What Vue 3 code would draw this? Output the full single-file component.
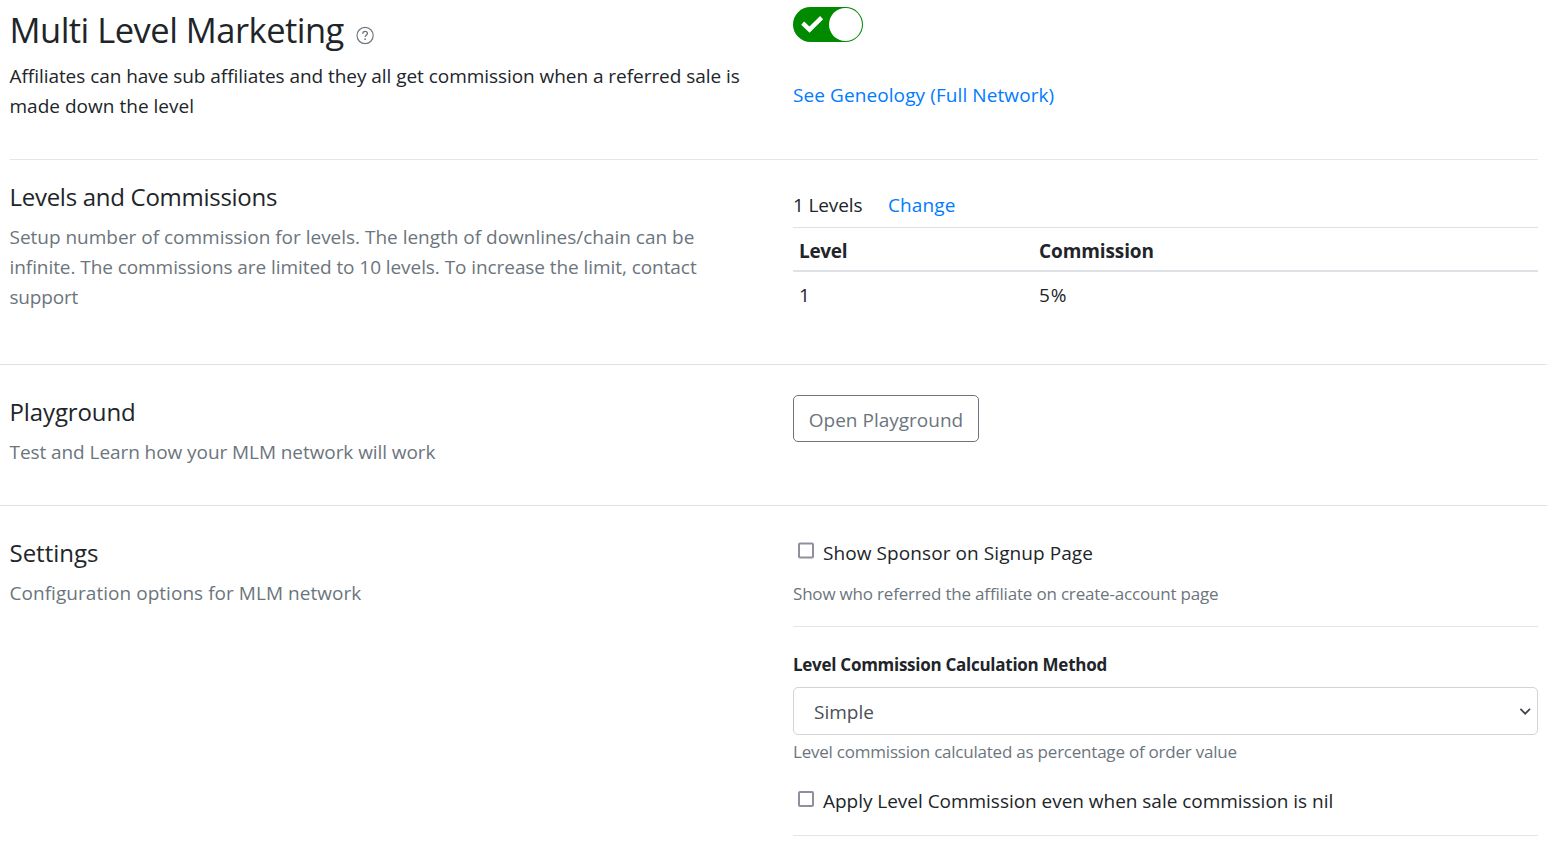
<script setup>
import { ref } from 'vue'

const enabled = ref(true)
const showSponsor = ref(false)
const applyNil = ref(false)
const method = ref('simple')
const levels = [{ level: 1, commission: '5%' }]
</script>

<template>
  <main class="page">
    <section class="row intro">
      <div class="left">
        <h1><span class="title">Multi Level Marketing</span>
          <svg class="help" viewBox="0 0 18 18" width="18" height="18" fill="none" stroke="#6c757d">
            <circle cx="9" cy="9" r="8.1" stroke-width="1.15" />
            <path d="M6.7 7.2C6.7 5.6 7.7 4.8 9 4.8s2.3.8 2.3 2.1c0 1.8-2.3 1.8-2.3 3.7" stroke-width="1.3" />
            <circle cx="9" cy="12.7" r=".85" fill="#6c757d" stroke="none" />
          </svg>
        </h1>
        <p class="lead"><span class="l1">Affiliates can have sub affiliates and they all get commission when a referred sale is</span><br><span class="l2">made down the level</span></p>
      </div>
      <div class="right">
        <label class="switch">
          <input v-model="enabled" type="checkbox">
          <svg class="tick" viewBox="0 0 24 20" width="24" height="20"><path d="M2.7 9.2 9.5 15.6 21.6 3.6" fill="none" stroke="#fff" stroke-width="4.4" /></svg>
          <span class="knob"></span>
        </label>
        <a class="tree">See Geneology (Full Network)</a>
      </div>
    </section>

    <section class="row levels">
      <div class="left">
        <h2 class="h-levels">Levels and Commissions</h2>
        <p class="muted"><span class="m1">Setup number of commission for levels. The length of downlines/chain can be</span><br><span class="m2">infinite. The commissions are limited to 10 levels. To increase the limit, contact</span><br><span class="m3">support</span></p>
      </div>
      <div class="right">
        <div class="count"><span class="n-levels">1 Levels</span><a class="change">Change</a></div>
        <table>
          <thead><tr><th><span class="th1">Level</span></th><th><span class="th2">Commission</span></th></tr></thead>
          <tbody><tr v-for="l in levels" :key="l.level"><td>{{ l.level }}</td><td class="pct">{{ l.commission }}</td></tr></tbody>
        </table>
      </div>
    </section>

    <section class="row playground">
      <div class="left">
        <h2 class="h-play">Playground</h2>
        <p class="muted"><span class="m4">Test and Learn how your MLM network will work</span></p>
      </div>
      <div class="right">
        <button type="button">Open Playground</button>
      </div>
    </section>

    <section class="row settings">
      <div class="left">
        <h2 class="h-set">Settings</h2>
        <p class="muted"><span class="m5">Configuration options for MLM network</span></p>
      </div>
      <div class="right">
        <label class="check sponsor"><input v-model="showSponsor" type="checkbox"><span class="c1">Show Sponsor on Signup Page</span></label>
        <p class="small s1">Show who referred the affiliate on create-account page</p>
        <hr>
        <p class="field">Level Commission Calculation Method</p>
        <div class="select">
          <select v-model="method"><option value="simple">Simple</option></select>
          <svg class="chevron" viewBox="0 0 12 8" width="12" height="8"><path d="M1.4.9 6.2 5.7 11 .9" fill="none" stroke="#3d444b" stroke-width="1.7" /></svg>
        </div>
        <p class="small s2">Level commission calculated as percentage of order value</p>
        <label class="check nil"><input v-model="applyNil" type="checkbox"><span class="c2">Apply Level Commission even when sale commission is nil</span></label>
        <hr class="last">
      </div>
    </section>
  </main>
</template>

<style>
body { background: #fff; overflow: hidden; }
</style>

<style scoped>
* { box-sizing: border-box; }
.page { height: 850px; overflow: hidden; font: 19px/30px "Segoe UI", "Open Sans", "Noto Sans", sans-serif; color: #212529; white-space: nowrap; }
.row { display: grid; grid-template-columns: 783px 745px; padding: 0 9px 0 10px; }
.left { margin-left: -0.5px; }
h1, h2, p { margin: 0; font-weight: 400; }
a { color: #007bff; cursor: pointer; }
.intro { height: 160px; margin: 0 9px 0 10px; padding: 0; border-bottom: 1px solid #e5e5e5; }
h1 { display: flex; align-items: flex-start; height: 61px; padding-top: 8px; font-size: 34.5px; line-height: 44px; }
.title { width: 334px; letter-spacing: -0.52px; }
.help { margin: 18px 0 0 12px; transform: translate(0.1px, 0.5px); }
.l1 { letter-spacing: -0.05px; }
.l2 { letter-spacing: 0.02px; }
.intro .right { display: flex; flex-direction: column; align-items: flex-start; padding-top: 7px; }
.switch { position: relative; display: block; width: 70px; height: 35px; border-radius: 18px; background: #008a00; }
.switch input { position: absolute; opacity: 0; margin: 0; }
.tick { position: absolute; left: 7px; top: 7px; }
.knob { position: absolute; right: 1px; top: 1px; width: 33px; height: 33px; border-radius: 50%; background: #fff; }
.tree { margin-top: 38px; letter-spacing: 0.09px; }
.levels { height: 205px; border-bottom: 1px solid #dee2e6; }
h2 { font-size: 24px; line-height: 30px; padding-top: 22px; height: 62px; }
.h-levels { letter-spacing: -0.28px; }
.h-play { letter-spacing: -0.12px; }
.h-set { letter-spacing: -0.02px; }
.muted, .small { color: #6c757d; }
.m1 { letter-spacing: -0.015px; }
.m2 { letter-spacing: -0.07px; }
.m3 { letter-spacing: -0.2px; }
.m4 { letter-spacing: -0.07px; }
.m5 { letter-spacing: 0.04px; }
.count { height: 67px; padding-top: 30px; display: flex; }
.n-levels { width: 95px; letter-spacing: -0.13px; }
.change { letter-spacing: 0.1px; }
table { width: 745px; border-collapse: collapse; table-layout: fixed; }
th, td { height: 43px; padding: 4px 6px 0; text-align: left; border-top: 1px solid #dee2e6; }
th { font-weight: 700; border-bottom: 2px solid #dee2e6; }
th:first-child { width: 240px; }
.th1 { letter-spacing: -0.3px; }
.th2 { letter-spacing: -0.1px; }
.pct { letter-spacing: 0.8px; }
.playground { height: 141px; border-bottom: 1px solid #dee2e6; }
.playground h2, .settings h2 { padding-top: 32px; height: 72px; }
button { display: block; margin-top: 30px; width: 186px; height: 47px; padding: 2px 0 0; border: 1px solid #6c757d; border-radius: 5px; background: #fff; color: #6c757d; font: inherit; }
.settings .right { padding-top: 32px; }
.check { display: flex; height: 30px; }
.check input { appearance: none; width: 16px; height: 16px; margin: 5px 9px 0 5px; border: 2px solid #8f8f9d; border-radius: 2px; background: #fff; }
.sponsor input { transform: translateY(-0.4px); }
.c1 { letter-spacing: 0.08px; }
.c2 { letter-spacing: -0.03px; }
.small { font-size: 17px; line-height: 26px; }
.s1 { margin-top: 13px; letter-spacing: -0.19px; }
hr { height: 1px; margin: 19px 0 0; border: 0; background: #e5e5e5; }
.field { margin-top: 25px; font-size: 17px; font-weight: 700; line-height: 26px; letter-spacing: -0.27px; }
.select { position: relative; height: 48px; margin-top: 9px; }
select { appearance: none; width: 100%; height: 48px; padding: 2px 20px 0; border: 1px solid #ced4da; border-radius: 5px; background: #fff; color: #495057; font: inherit; }
.chevron { position: absolute; right: 7px; top: 21px; }
.s2 { margin-top: 4px; letter-spacing: -0.22px; }
.nil { margin-top: 21px; }
.last { margin-top: 19px; }
</style>
